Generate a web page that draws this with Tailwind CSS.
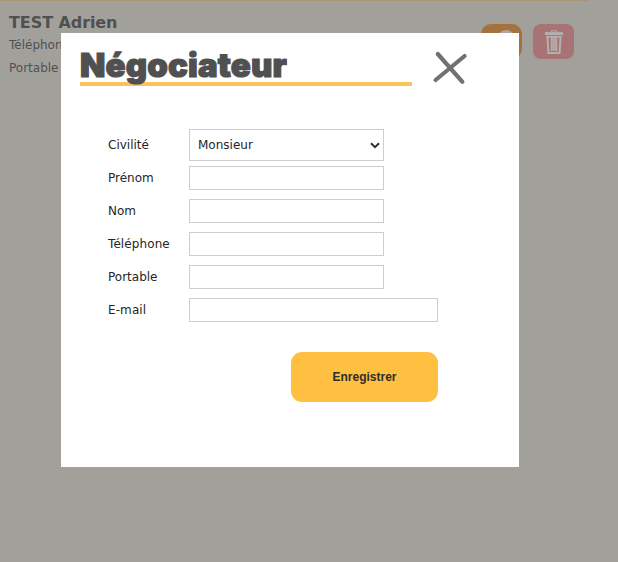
<!DOCTYPE html>
<html lang="fr">
<head>
  <meta charset="UTF-8">
  <meta name="viewport" content="width=device-width, initial-scale=1.0">
  <title>Négociateur</title>
  <script src="https://cdn.jsdelivr.net/npm/@tailwindcss/browser@4"></script>
</head>
<body class="relative h-[562px] overflow-hidden bg-[#a2a09b] font-['DejaVu_Sans',Verdana,sans-serif] text-xs text-[#505050]">

  <!-- Contact card behind the dialog -->
  <main class="w-[588px] border-t border-[#a79672] flex justify-between pl-[9px] pr-[14px]">
    <div>
      <h2 class="mt-[11px] text-[16px] leading-[22px] font-bold tracking-[-0.08px]">TEST Adrien</h2>
      <p class="leading-[23px]">Téléphone</p>
      <p class="leading-[23px]">Portable</p>
    </div>
    <div class="mt-[23px] flex gap-[11px]">
      <button class="w-[41px] h-[35px] rounded-[10px] bg-[#a5713e] flex justify-center">
        <svg class="w-5 h-5 mt-[5px] ml-2" viewBox="0 0 20 20"><circle cx="10" cy="10" r="9" fill="#a9a8a6"/></svg>
      </button>
      <button class="w-[41px] h-[35px] rounded-[8px] bg-[#a87375] flex justify-center">
        <svg class="w-5 h-6 mt-[6px] ml-px" viewBox="0 0 20 24" fill="none" stroke="#b3b0ae">
          <path d="M7.5 2V.8h5V2" stroke-width="1"/>
          <path d="M1 3.6h18" stroke-width="3"/>
          <path d="M2.5 6.8h15" stroke-width="1.6"/>
          <path d="M3.4 6l1 17h11.2l1-17M7.8 7v14M12.2 7v14" stroke-width="2"/>
          <path d="M10 7v14" stroke-width="1.6"/>
        </svg>
      </button>
    </div>
  </main>

  <!-- Dialog -->
  <section class="absolute left-[61px] top-[33px] w-[458px] h-[434px] bg-white">
    <header class="flex pl-[19px]">
      <h1 class="w-[332px] h-[53px] border-b-4 border-[#f8c55c] pt-[13px] font-['Inter',sans-serif] font-black text-[33px] leading-[38px] tracking-[0.15px] text-[#505050] whitespace-nowrap [-webkit-text-stroke:1.2px_#505050]">Négociateur</h1>
      <button class="ml-[20px] mt-[17px] w-9 h-9">
        <svg class="w-9 h-9" viewBox="0 0 36 36" fill="none" stroke="#717171" stroke-width="4.2" stroke-linecap="round">
          <path d="M5.8 4L30.4 31.8M32.6 6L3.6 30"/>
        </svg>
      </button>
    </header>

    <form class="pt-[43px] pl-[47px] text-[#252525]">
      <div class="flex items-center mb-[5px]">
        <label class="w-[81px]">Civilité</label>
        <div class="w-[195px] h-8 border border-[#cecece] flex items-center justify-between pl-2 pr-[3px]">
          <span>Monsieur</span>
          <svg class="w-[10px] h-[7px]" viewBox="0 0 10 7" fill="none" stroke="#303030" stroke-width="2"><path d="M1 1.2l4 4 4-4"/></svg>
        </div>
      </div>
      <div class="flex flex-col gap-[9px]">
        <div class="flex items-center">
          <label class="w-[81px]">Prénom</label>
          <input type="text" class="w-[195px] h-6 border border-[#cecece]">
        </div>
        <div class="flex items-center">
          <label class="w-[81px]">Nom</label>
          <input type="text" class="w-[195px] h-6 border border-[#cecece]">
        </div>
        <div class="flex items-center">
          <label class="w-[81px] tracking-[0.1px]">Téléphone</label>
          <input type="text" class="w-[195px] h-6 border border-[#cecece]">
        </div>
        <div class="flex items-center">
          <label class="w-[81px]">Portable</label>
          <input type="text" class="w-[195px] h-6 border border-[#cecece]">
        </div>
        <div class="flex items-center">
          <label class="w-[81px] tracking-[0.1px]">E-mail</label>
          <input type="text" class="w-[249px] h-6 border border-[#cecece]">
        </div>
      </div>
      <button type="button" class="block mt-[30px] ml-[183px] w-[147px] h-[50px] rounded-[11px] border-2 border-[#ffc041] bg-[#ffc041] font-['Liberation_Sans',Arial,sans-serif] font-bold text-xs text-[#2d2d2d]">Enregistrer</button>
    </form>
  </section>
</body>
</html>
